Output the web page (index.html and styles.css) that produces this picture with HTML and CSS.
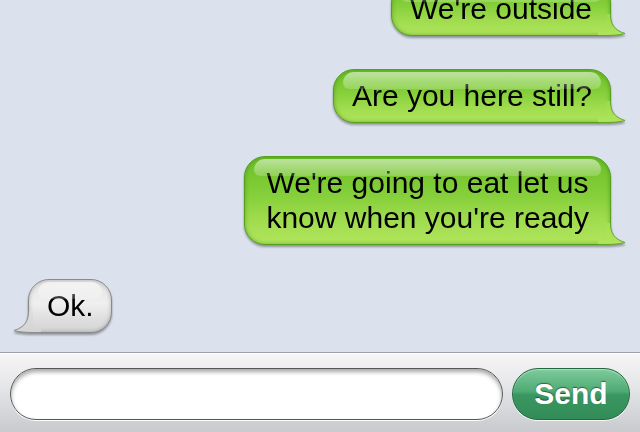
FILE: index.html
```html
<!DOCTYPE html>
<html>
<head>
<meta charset="utf-8">
<link rel="stylesheet" href="styles.css">
</head>
<body>
<div class="screen">
  <div class="messages">
    <div class="row out first">
      <div class="bubble green">We're outside
        <svg class="tail tail-r" width="30" height="24" viewBox="0 0 30 24"><defs><linearGradient id="gt1" x1="0" y1="0" x2="0" y2="1"><stop offset="0" stop-color="#9cd94b"/><stop offset="1" stop-color="#b0e55c"/></linearGradient></defs><path d="M10 2 L14.5 2 C14.5 12 18 18 29 21.5 C22 23.5 14 23.5 2 23.5 L2 19 L10 19 Z" fill="url(#gt1)"/><path d="M14.5 2 C14.5 12 18 18 29 21.5 C22 23.5 14 23.5 2 23.5" fill="none" stroke="#5fa52b" stroke-width="1"/></svg>
      </div>
    </div>
    <div class="row out">
      <div class="bubble green">Are you here still?
        <svg class="tail tail-r" width="30" height="24" viewBox="0 0 30 24"><defs><linearGradient id="gt2" x1="0" y1="0" x2="0" y2="1"><stop offset="0" stop-color="#9cd94b"/><stop offset="1" stop-color="#b0e55c"/></linearGradient></defs><path d="M10 2 L14.5 2 C14.5 12 18 18 29 21.5 C22 23.5 14 23.5 2 23.5 L2 19 L10 19 Z" fill="url(#gt2)"/><path d="M14.5 2 C14.5 12 18 18 29 21.5 C22 23.5 14 23.5 2 23.5" fill="none" stroke="#5fa52b" stroke-width="1"/></svg>
      </div>
    </div>
    <div class="row out">
      <div class="bubble green multi">We're going to eat let us<br>know when you're ready
        <svg class="tail tail-r" width="30" height="24" viewBox="0 0 30 24"><defs><linearGradient id="gt3" x1="0" y1="0" x2="0" y2="1"><stop offset="0" stop-color="#a6df53"/><stop offset="1" stop-color="#b0e55c"/></linearGradient></defs><path d="M10 2 L14.5 2 C14.5 12 18 18 29 21.5 C22 23.5 14 23.5 2 23.5 L2 19 L10 19 Z" fill="url(#gt3)"/><path d="M14.5 2 C14.5 12 18 18 29 21.5 C22 23.5 14 23.5 2 23.5" fill="none" stroke="#5fa52b" stroke-width="1"/></svg>
      </div>
    </div>
    <div class="row in">
      <div class="bubble gray">Ok.
        <svg class="tail tail-l" width="30" height="24" viewBox="0 0 30 24"><defs><linearGradient id="gt4" x1="0" y1="0" x2="0" y2="1"><stop offset="0" stop-color="#dedede"/><stop offset="1" stop-color="#d4d4d4"/></linearGradient></defs><path d="M20 2 L15.5 2 C15.5 12 12 18 1 21.5 C8 23.5 16 23.5 28 23.5 L28 19 L20 19 Z" fill="url(#gt4)"/><path d="M15.5 2 C15.5 12 12 18 1 21.5 C8 23.5 16 23.5 28 23.5" fill="none" stroke="#8a8a8a" stroke-width="1"/></svg>
      </div>
    </div>
  </div>
  <div class="composer">
    <div class="field"></div>
    <button class="send">Send</button>
  </div>
</div>
</body>
</html>
```
FILE: styles.css
```css
html, body {
  margin: 0;
  padding: 0;
}
body {
  width: 640px;
  height: 432px;
  overflow: hidden;
  background: #dbe2ed;
  font-family: "Liberation Sans", Arial, sans-serif;
}
.screen {
  width: 640px;
  height: 432px;
  display: flex;
  flex-direction: column;
}
.messages {
  height: 352px;
  display: flex;
  flex-direction: column;
  gap: 33px;
  overflow: hidden;
}
.row {
  display: flex;
}
.row.out {
  justify-content: flex-end;
  padding-right: 29px;
}
.row.in {
  justify-content: flex-start;
  padding-left: 28px;
  margin-top: 1px;
}
.row.first {
  margin-top: -18px;
}
.bubble {
  position: relative;
  font-size: 30px;
  line-height: 35px;
  color: #000;
  padding: 8px 18px 9px 18px;
  border-radius: 21px;
  filter: drop-shadow(0 2px 1px rgba(0,0,0,0.35));
}
.bubble::before {
  content: "";
  position: absolute;
  left: 9px;
  right: 9px;
  top: 2px;
  height: 17px;
  border-radius: 14px 14px 8px 8px;
  background: linear-gradient(rgba(255,255,255,0.55), rgba(255,255,255,0.18));
}
.bubble.green {
  background: linear-gradient(#6cc027 0%, #86d03b 45%, #a0dc4e 72%, #b0e55c 100%);
  border: 1px solid #55a01f;
  border-bottom-right-radius: 0;
  box-shadow: inset 0 0 4px rgba(40,110,0,0.45);
}
.bubble.multi {
  padding-left: 21px;
  padding-right: 21px;
}
.bubble.gray {
  background: linear-gradient(#e4e4e4 0%, #efefef 45%, #e0e0e0 72%, #d4d4d4 100%);
  border: 1px solid #8a8a8a;
  border-bottom-left-radius: 0;
  box-shadow: inset 0 0 4px rgba(0,0,0,0.25);
  padding: 8px 17px 9px 18px;
}
.tail {
  position: absolute;
  bottom: -1px;
}
.tail-r {
  right: -16px;
}
.tail-l {
  left: -16px;
}
.composer {
  flex: 1;
  display: flex;
  align-items: center;
  gap: 9px;
  padding: 0 8px 0 10px;
  border-top: 1px solid #9da2aa;
  background: linear-gradient(#f6f6f7 0%, #e6e7e9 40%, #c9cace 100%);
  box-shadow: inset 0 1px 0 #ffffff;
}
.field {
  width: 491px;
  height: 50px;
  border-radius: 26px;
  background: #fff;
  border: 1px solid #575757;
  box-shadow: inset 0 3px 4px rgba(0,0,0,0.35), 0 1px 0 rgba(255,255,255,0.9);
  margin-top: 2px;
}
.send {
  width: 118px;
  height: 52px;
  border-radius: 26px;
  border: 1px solid #23683e;
  background: linear-gradient(#7fcb9c 0%, #4eaa73 45%, #3a9660 52%, #328c57 100%);
  color: #fff;
  font-family: "Liberation Sans", Arial, sans-serif;
  font-weight: bold;
  font-size: 30px;
  text-shadow: 0 -1px 1px rgba(0,0,0,0.45);
  box-shadow: 0 1px 0 rgba(255,255,255,0.8), inset 0 1px 1px rgba(255,255,255,0.4);
  margin-top: 2px;
  padding: 0;
}
```
